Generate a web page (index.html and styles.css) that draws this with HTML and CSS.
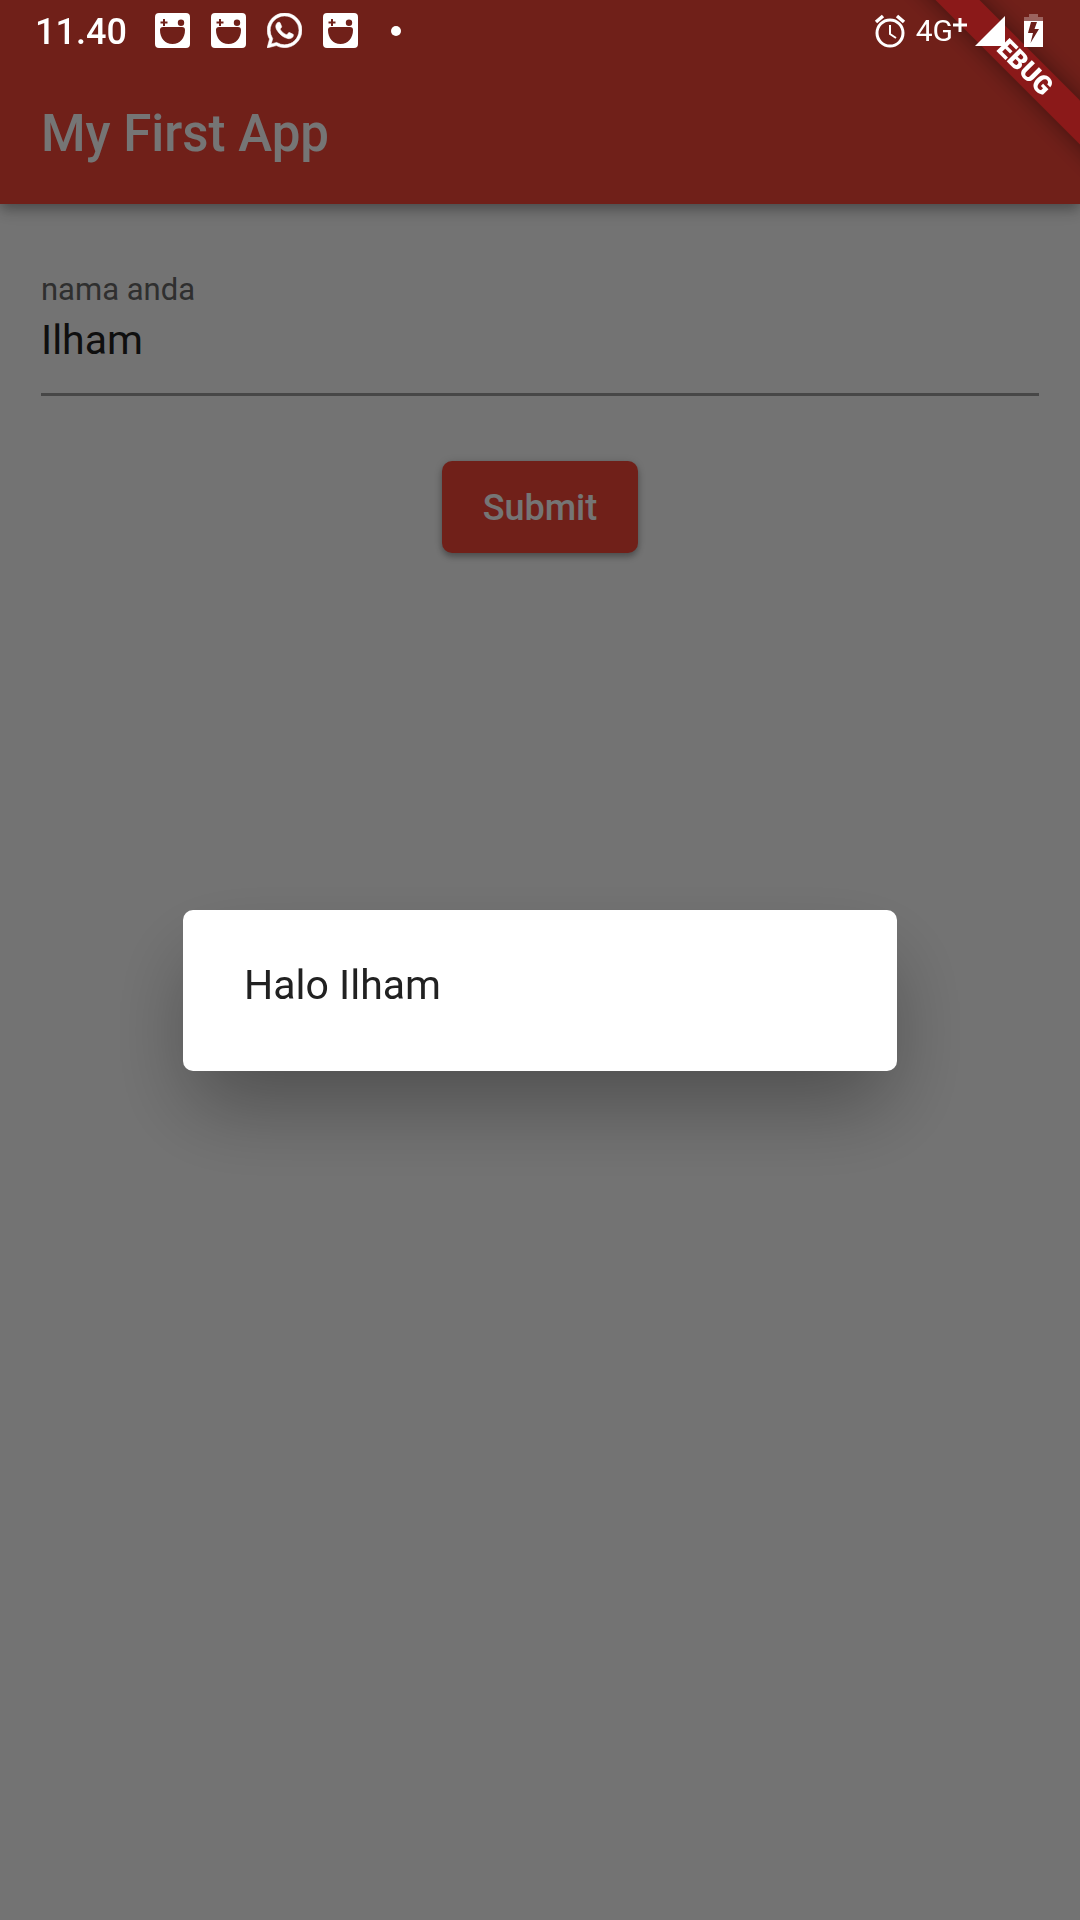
FILE: index.html
```html
<!DOCTYPE html>
<html lang="id">
<head>
<meta charset="utf-8">
<meta name="viewport" content="width=device-width, initial-scale=1">
<title>My First App</title>
<link rel="stylesheet" href="styles.css">
</head>
<body>
<svg class="symbols" aria-hidden="true">
  <symbol id="face" viewBox="0 0 35 35">
    <path fill="currentColor" fill-rule="evenodd" d="M4 0H31Q35 0 35 4V31Q35 35 31 35H4Q0 35 0 31V4Q0 0 4 0ZM8 6V8.500H5.500V10.500H8V13H10V10.500H12.500V8.500H10V6ZM26 6.500A3.200 3.200 0 1 0 26 12.900A3.200 3.200 0 1 0 26 6.500ZM8 14Q5 14 5 17C5 25 10 31 17.500 31S30 25 30 17Q30 14 27 14Z"/>
  </symbol>
</svg>
<header class="app-bar">
  <div class="status-bar">
    <div class="status-left">
      <span class="clock">11.40</span>
      <svg class="notice"><use href="#face"/></svg>
      <svg class="notice"><use href="#face"/></svg>
      <svg class="notice" viewBox="0 0 24 24"><path fill="currentColor" stroke="currentColor" stroke-width=".4" d="M17.472 14.382c-.297-.149-1.758-.867-2.030-.967-.273-.099-.471-.148-.670.150-.197.297-.767.966-.940 1.164-.173.199-.347.223-.644.075-.297-.150-1.255-.463-2.390-1.475-.883-.788-1.480-1.761-1.653-2.059-.173-.297-.018-.458.130-.606.134-.133.298-.347.446-.520.149-.174.198-.298.298-.497.099-.198.050-.371-.025-.520-.075-.149-.669-1.612-.916-2.207-.242-.579-.487-.500-.669-.510-.173-.008-.371-.010-.570-.010-.198 0-.520.074-.792.372-.272.297-1.040 1.016-1.040 2.479 0 1.462 1.065 2.875 1.213 3.074.149.198 2.096 3.200 5.077 4.487.709.306 1.262.489 1.694.625.712.227 1.360.195 1.871.118.571-.085 1.758-.719 2.006-1.413.248-.694.248-1.289.173-1.413-.074-.124-.272-.198-.570-.347m-5.421 7.403h-.004a9.870 9.870 0 01-5.031-1.378l-.361-.214-3.741.982.998-3.648-.235-.374a9.860 9.860 0 01-1.510-5.260c.001-5.450 4.436-9.884 9.888-9.884 2.640 0 5.122 1.030 6.988 2.898a9.825 9.825 0 012.893 6.994c-.003 5.450-4.437 9.884-9.885 9.884m8.413-18.297A11.815 11.815 0 0012.050 0C5.495 0 .160 5.335.157 11.892c0 2.096.547 4.142 1.588 5.945L.057 24l6.305-1.654a11.882 11.882 0 005.683 1.448h.005c6.554 0 11.890-5.335 11.893-11.893a11.821 11.821 0 00-3.480-8.413z"/></svg>
      <svg class="notice"><use href="#face"/></svg>
      <span class="dot"></span>
    </div>
    <div class="status-right">
      <svg class="alarm" viewBox="0 0 32 34" fill="none" stroke="currentColor"><circle cx="16" cy="19" r="13" stroke-width="3"/><path stroke-width="2" d="M16 11V20L22 24"/><path stroke-width="3.500" d="M2 8L9 2M30 8L23 2"/></svg>
      <span class="network">4G<svg class="plus" viewBox="0 0 14 14"><path stroke="currentColor" stroke-width="3" d="M7 0V14M0 7H14"/></svg></span>
      <svg class="signal" viewBox="0 0 30 30"><path fill="currentColor" d="M30 0V30H0Z"/></svg>
      <svg class="battery" viewBox="0 0 19 33" fill="currentColor"><path opacity=".3" d="M5 0H14V3H19V7H0V3H5Z"/><path fill-rule="evenodd" d="M0 7H19V33H0ZM7 8L4 19H9L6.500 29L15 15H10.500L13 8Z"/></svg>
    </div>
  </div>
  <h1 class="title">My First App</h1>
</header>
<main>
  <form class="form">
    <label class="label" for="name">nama anda</label>
    <input class="field" id="name" type="text" value="Ilham">
    <button class="submit" type="button">Submit</button>
  </form>
</main>
<div class="scrim">
  <div class="dialog" role="dialog" aria-modal="true" aria-labelledby="greeting">
    <p class="greeting" id="greeting">Halo Ilham</p>
  </div>
</div>
<div class="banner-corner"><span class="banner">DEBUG</span></div>
</body>
</html>
```
FILE: styles.css
```css
* {
  box-sizing: border-box;
}

body {
  margin: 0;
  min-height: 100vh;
  background: #fafafa;
  font-family: Roboto, sans-serif;
}

.symbols {
  position: absolute;
  width: 0;
  height: 0;
}

/* App bar and system status */
.app-bar {
  background: #f44638;
  box-shadow: 0 5px 10px -2px rgba(0, 0, 0, .2), 0 8px 13px rgba(0, 0, 0, .12), 0 3px 20px rgba(0, 0, 0, .1);
}

.status-bar {
  position: relative;
  z-index: 3;
  display: flex;
  justify-content: space-between;
  height: 61px;
  padding: 0 37px 0 35px;
  color: #fff;
}

.status-left,
.status-right {
  display: flex;
  align-items: center;
}

.status-left {
  gap: 21px;
}

.clock {
  margin-right: 7px;
  font-size: 36px;
  font-weight: 500;
  line-height: 44px;
  padding-top: 3px;
}

.notice {
  width: 35px;
  height: 35px;
}

.dot {
  width: 10px;
  height: 10px;
  margin-left: 12px;
  border-radius: 50%;
  background: #fff;
}

.alarm {
  width: 32px;
  height: 34px;
  margin-right: 10px;
}

.network {
  display: flex;
  font-size: 30px;
  line-height: 40px;
}

.plus {
  width: 14px;
  height: 14px;
  margin-top: 7px;
}

.signal {
  width: 30px;
  height: 30px;
  margin: 0 19px 0 8px;
}

.battery {
  width: 19px;
  height: 33px;
}

.title {
  margin: 0;
  padding: 2px 41px 0;
  color: #fff;
  font-size: 51px;
  font-weight: 500;
  line-height: 141px;
}

/* Name form */
.form {
  display: flex;
  flex-direction: column;
  padding: 68px 41px;
}

.label {
  color: #666;
  font-size: 31px;
  line-height: 36px;
}

.field {
  width: 100%;
  height: 80px;
  margin: 8px 0 65px;
  padding: 0 0 29px;
  border: 0;
  border-bottom: 3px solid #9b9b9b;
  background: none;
  color: #212121;
  font: 400 41px/48px Roboto, sans-serif;
  outline: 0;
}

.submit {
  align-self: center;
  padding: 2px 41px 0;
  border: 0;
  border-radius: 10px;
  background: #f44638;
  box-shadow: 0 4px 6px rgba(0, 0, 0, .26), 0 1px 8px rgba(0, 0, 0, .14);
  color: #fff;
  font: 500 36px/90px Roboto, sans-serif;
}

/* Greeting dialog */
.scrim {
  position: fixed;
  inset: 0;
  z-index: 1;
  display: flex;
  align-items: center;
  justify-content: center;
  padding: 61px 102px 0;
  background: rgba(0, 0, 0, .54);
}

.dialog {
  width: 100%;
  max-width: 714px;
  padding: 51px 61px 62px;
  border-radius: 10px;
  background: #fff;
  box-shadow: 0 41px 84px -8px rgba(0, 0, 0, .32);
}

.greeting {
  margin: 0;
  color: #212121;
  font-size: 41px;
  line-height: 48px;
}

/* Corner ribbon */
.banner-corner {
  position: fixed;
  top: 0;
  right: 0;
  z-index: 2;
  width: 200px;
  height: 200px;
  overflow: hidden;
}

.banner {
  position: absolute;
  top: 46px;
  right: -89px;
  width: 300px;
  background: #8b1919;
  box-shadow: 0 0 24px rgba(0, 0, 0, .45);
  color: #fff;
  font-size: 26px;
  font-weight: 900;
  line-height: 31px;
  text-align: center;
  transform: rotate(45deg);
}
```
